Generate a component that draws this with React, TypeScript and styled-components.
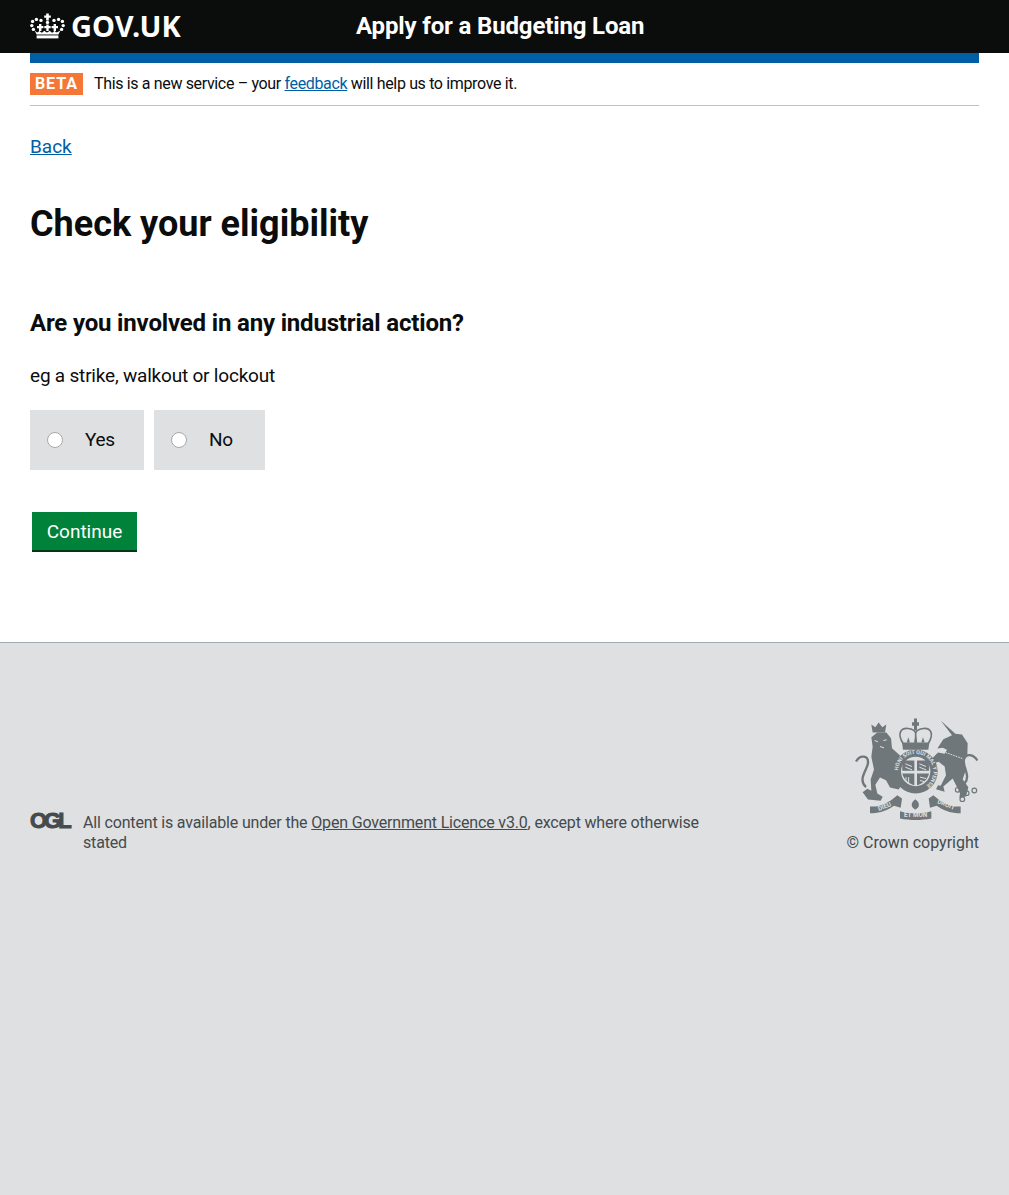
import React from "react";
import styled, { createGlobalStyle } from "styled-components";

const GlobalStyle = createGlobalStyle`
  html, body {
    margin: 0;
    padding: 0;
    height: 100%;
  }
  body {
    font-family: Roboto, "Liberation Sans", sans-serif;
    color: #0b0c0c;
    background: #dee0e2;
  }
  #root {
    min-height: 100%;
  }
`;

const CrownIcon = () => (
  <svg width="35" height="26" viewBox="0 0 35 26" fill="#fff" aria-hidden="true">
    <path d="M16.2 0.6h2.6v2h2v2.2h-2v2.8h-2.6V4.8h-2V2.6h2z" />
    <circle cx="17.5" cy="9.4" r="1.7" />
    <circle cx="11" cy="7.4" r="1.7" />
    <circle cx="24" cy="7.4" r="1.7" />
    <circle cx="6.4" cy="6.4" r="1.7" />
    <circle cx="28.6" cy="6.4" r="1.7" />
    <circle cx="2.6" cy="8.4" r="1.7" />
    <circle cx="32.4" cy="8.4" r="1.7" />
    <circle cx="1.8" cy="12.6" r="1.7" />
    <circle cx="33.2" cy="12.6" r="1.7" />
    <circle cx="3.4" cy="16.4" r="1.7" />
    <circle cx="31.6" cy="16.4" r="1.7" />
    <path d="M9 11h2.4v2h2v2.2h-2V18H9v-2.8H7V13h2zM16.3 11.4h2.4V13h2v2.2h-2V18h-2.4v-2.8h-2V13h2zM23.6 11H26v2h2v2.2h-2V18h-2.4v-2.8h-2V13h2z" />
    <path d="M4.6 17.6l2 4h21.8l2-4-3.2 1.6c-.7.3-1.3 0-1.7-.5l-1-1-1.1 1.2c-.7.7-1.6.7-2.3 0l-1.4-1.2-1.6 1.4c-.7.5-1.5.5-2.2 0l-1.6-1.4-1.4 1.2c-.7.7-1.6.7-2.3 0l-1.1-1.2-1 1c-.4.5-1 .8-1.7.5z" />
    <rect x="6.6" y="22.4" width="21.8" height="3" />
  </svg>
);

const Crest = () => (
  <svg width="125" height="102" viewBox="70 55 375 305" aria-hidden="true">
    <g fill="#6f777b">
      <path d="M122 112l18-14h27l14 17 3 30 24 22-8 30-10 10 8 32 14 18-8 12-26-6-12-22-18-8-14 22 6 26 16 10-6 12-38-4-16-22 14-10 12 6-2-34 10-30-8-38 4-30z" />
      <path d="M126 98l-4-24 12 8 10-14 11 14 12-8-4 24z" />
      <path d="M338 118l26-12-34-44 44 40 20 2 17 26-1 38-12 16 7 28-9 26 17 24-7 28-20 4 2-14-8-16-14-28-28 24 4 16-26-8 6-12 8 2 16-32-4-26-18-14-14 4-6-14 18-18 20 4 7-12-13-6-16 2z" />
      <path d="M250 78h-6V67h6V56h9v11h6v11h-6v14h-9z" />
      <path d="M214 128h82l-3 22h-76z" />
      <path d="M228 128l5-16 5 16zM250 128l5-26 5 26zM272 128l5-16 5 16z" />
      <circle cx="255" cy="215" r="66" />
      <path d="M118 320c30 2 55-10 82-34l14 10-4 28-20-6c-20 14-45 24-72 22zM390 320c-30 2-55-10-82-34l-14 10 4 28 20-6c20 14 45 24 72 22zM208 334c30 8 64 8 94 0v22c-30 6-64 6-94 0z" />
      <path d="M254 298c7 5 13 12 10 21-2 6-6 7-10 10-4-3-8-4-10-10-3-9 3-16 10-21z" />
    </g>
    <g fill="none" stroke="#6f777b" strokeWidth="7">
      <path d="M106 262c-26-24 4-52 6-72 2-22-22-28-36-5" />
      <path d="M402 250c20-22-8-50-2-72 6-18 28-16 40 4" />
      <circle cx="381" cy="270" r="7" strokeWidth="3.5" />
      <circle cx="408" cy="280" r="7" strokeWidth="3.5" />
      <circle cx="431" cy="272" r="7" strokeWidth="3.5" />
      <circle cx="395" cy="298" r="7" strokeWidth="3.5" />
      <path d="M218 132c-20-30-8-48 14-46 11 1 20 6 23 13 3-7 12-12 23-13 22-2 34 16 14 46M255 99v32" strokeWidth="5" />
    </g>
    <circle cx="255" cy="215" r="44" fill="#dee0e2" />
    <g fill="#6f777b">
      <path d="M219 182h32v31h-36c-1-12 0-22 4-31zM259 182h32c4 9 5 19 4 31h-36zM215 221h36v35c-18-5-32-17-36-35zM259 221h36c-4 18-18 30-36 35z" />
    </g>
    <g fill="none" stroke="#dee0e2" strokeWidth="3">
      <path d="M224 192l20 8M266 192l20 8M224 202l20 8M266 202l20 8M268 232l18 4M268 242l12 3M226 232v14M234 232v18" />
      <path d="M345 158l50 18" strokeDasharray="5 3" />
      <path d="M132 122l10 4M158 122l10-2M148 140l12 4" />
    </g>
    <path id="garter" d="M202 215a53 53 0 1 1 106 0a53 53 0 1 1-106 0" fill="none" />
    <text fontFamily="Roboto, sans-serif" fontSize="16" fontWeight="700" fill="#dee0e2">
      <textPath href="#garter" startOffset="1%">
        HONI SOIT QUI MAL Y PENSE
      </textPath>
    </text>
    <g fontFamily="Roboto, sans-serif" fontSize="19" fontWeight="700" fill="#dee0e2" textAnchor="middle">
      <text x="164" y="326" transform="rotate(-22 164 326)">DIEU</text>
      <text x="255" y="352">ET MON</text>
      <text x="344" y="320" transform="rotate(22 344 320)">DROIT</text>
    </g>
  </svg>
);

export default function App() {
  return (
    <>
      <GlobalStyle />
      <Page>
        <Header>
          <LogoLink href="#">
            <CrownIcon />
            <LogoText>GOV.UK</LogoText>
          </LogoLink>
          <ServiceName href="#">Apply for a Budgeting Loan</ServiceName>
        </Header>
        <Main>
          <BlueBar />
          <PhaseBanner>
            <PhaseTag>BETA</PhaseTag>
            <PhaseText>
              This is a new service – your <a href="#">feedback</a> will help us to improve it.
            </PhaseText>
          </PhaseBanner>
          <BackLink href="#">Back</BackLink>
          <Title>Check your eligibility</Title>
          <Question>Are you involved in any industrial action?</Question>
          <Hint>eg a strike, walkout or lockout</Hint>
          <Options>
            <Option $width={114}>
              <Radio type="radio" name="action" />
              Yes
            </Option>
            <Option $width={111}>
              <Radio type="radio" name="action" />
              No
            </Option>
          </Options>
          <ContinueButton type="button">Continue</ContinueButton>
        </Main>
        <Footer>
          <FooterInner>
            <Licence>
              <OglMark>OGL</OglMark>
              <LicenceText>
                All content is available under the <a href="#">Open Government Licence v3.0</a>, except where otherwise stated
              </LicenceText>
            </Licence>
            <Copyright>
              <Crest />
              <CopyrightText href="#">© Crown copyright</CopyrightText>
            </Copyright>
          </FooterInner>
        </Footer>
      </Page>
    </>
  );
}

const Page = styled.div`
  display: flex;
  flex-direction: column;
  min-height: 1195px;
`;

const Header = styled.header`
  height: 53px;
  background: #0b0c0c;
  padding: 0 30px 2px;
  display: flex;
  align-items: center;
  box-sizing: border-box;
`;

const LogoLink = styled.a`
  width: 326px;
  display: flex;
  align-items: center;
  gap: 6px;
  color: #fff;
  text-decoration: none;
`;

const LogoText = styled.span`
  font-family: "Noto Sans", sans-serif;
  font-size: 29px;
  font-weight: 700;
  line-height: 1;
`;

const ServiceName = styled.a`
  font-size: 24px;
  font-weight: 700;
  letter-spacing: -0.15px;
  color: #fff;
  text-decoration: none;
`;

const Main = styled.main`
  background: #fff;
  padding: 0 30px 92px;
  display: flex;
  flex-direction: column;
  align-items: flex-start;
`;

const BlueBar = styled.div`
  align-self: stretch;
  height: 10px;
  background: #005ea5;
`;

const PhaseBanner = styled.div`
  align-self: stretch;
  height: 43px;
  box-sizing: border-box;
  padding-top: 10px;
  border-bottom: 1px solid #bfc1c3;
  display: flex;
  align-items: flex-start;
  gap: 11px;
`;

const PhaseTag = styled.strong`
  width: 53px;
  height: 22px;
  background: #f47738;
  color: #fff;
  font-size: 16px;
  font-weight: 700;
  line-height: 22px;
  text-align: center;
  letter-spacing: 1px;
`;

const PhaseText = styled.p`
  margin: 0;
  font-size: 16px;
  line-height: 22px;
  letter-spacing: -0.35px;

  a {
    color: #005ea5;
  }
`;

const BackLink = styled.a`
  margin-top: 28px;
  font-size: 19px;
  line-height: 26px;
  color: #005ea5;
`;

const Title = styled.h1`
  margin: 42px 0 0;
  font-size: 36px;
  font-weight: 700;
  line-height: 44px;
`;

const Question = styled.h2`
  margin: 60px 0 0;
  font-size: 24px;
  font-weight: 700;
  line-height: 34px;
  letter-spacing: -0.17px;
`;

const Hint = styled.p`
  margin: 23px 0 0;
  font-size: 19px;
  line-height: 26px;
  letter-spacing: -0.2px;
`;

const Options = styled.div`
  margin-top: 21px;
  display: flex;
  gap: 10px;
`;

const Option = styled.label<{ $width: number }>`
  width: ${(p) => p.$width}px;
  height: 60px;
  box-sizing: border-box;
  padding: 0 0 2px 17px;
  background: #dee0e2;
  display: flex;
  align-items: center;
  gap: 22px;
  font-size: 19px;
  letter-spacing: -0.3px;
`;

const Radio = styled.input`
  appearance: none;
  margin: 2px 0 0;
  width: 16px;
  height: 16px;
  box-sizing: border-box;
  background: #fff;
  border: 1px solid #a9a9a9;
  border-radius: 50%;
`;

const ContinueButton = styled.button`
  margin: 42px 0 0 2px;
  width: 105px;
  height: 38px;
  padding: 0;
  border: 0;
  background: #00823b;
  box-shadow: 0 2px 0 #003618;
  color: #fff;
  font-family: inherit;
  font-size: 19px;
`;

const Footer = styled.footer`
  flex: 1;
  background: #dee0e2;
  border-top: 1px solid #a1acb2;
  padding: 75px 30px 0;
`;

const FooterInner = styled.div`
  display: flex;
  justify-content: space-between;
  align-items: flex-end;
`;

const Licence = styled.div`
  width: 680px;
  display: flex;
  align-items: flex-start;
  gap: 12px;
`;

const OglMark = styled.span`
  flex: none;
  width: 41px;
  margin-top: -2px;
  font-family: "Liberation Sans", sans-serif;
  font-size: 22px;
  font-weight: 700;
  line-height: 20px;
  letter-spacing: -3px;
  color: #454a4c;
  -webkit-text-stroke: 1px #454a4c;
`;

const LicenceText = styled.p`
  margin: 0;
  font-size: 16px;
  line-height: 20px;
  letter-spacing: -0.17px;
  color: #454a4c;

  a {
    color: #454a4c;
  }
`;

const Copyright = styled.div`
  display: flex;
  flex-direction: column;
  align-items: flex-end;
  gap: 13px;
`;

const CopyrightText = styled.a`
  font-size: 16px;
  line-height: 20px;
  color: #454a4c;
  text-decoration: none;
`;
